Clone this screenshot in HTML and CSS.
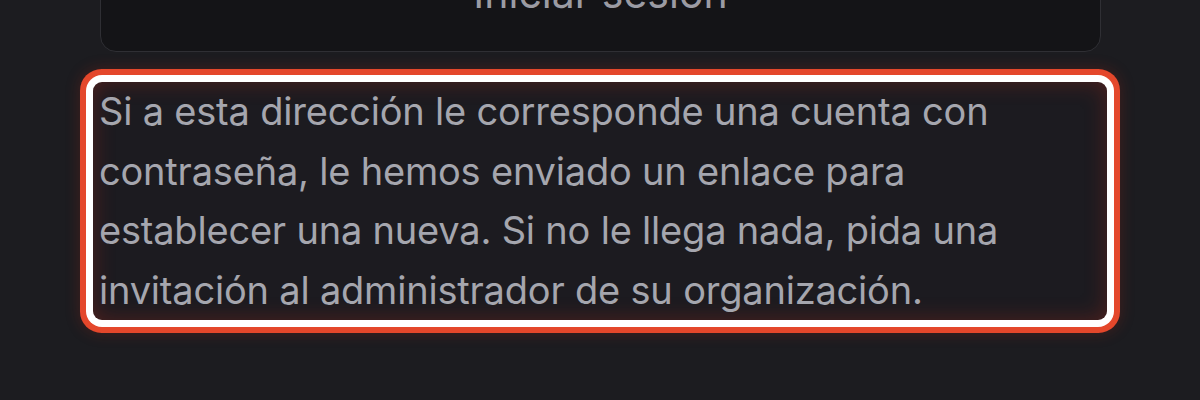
FILE: index.html
```html
<!DOCTYPE html>
<html lang="es">
<head>
<meta charset="utf-8">
<title>Restablecer contraseña</title>
<link rel="stylesheet" href="styles.css">
</head>
<body>
<main class="panel">
  <button class="btn" type="button">Iniciar sesión</button>
  <p class="note">Si a esta dirección le corresponde una cuenta con contraseña, le hemos enviado un enlace para establecer una nueva. Si no le llega nada, pida una invitación al administrador de su organización.</p>
</main>
</body>
</html>
```

FILE: styles.css
```css
html, body {
  margin: 0;
  padding: 0;
  background: #1c1c20;
  height: 100%;
  overflow: hidden;
}

body {
  font-family: Inter, "Noto Sans", "Liberation Sans", sans-serif;
}

.panel {
  width: 1001px;
  margin: -48px 0 0 100px;
  display: flex;
  flex-direction: column;
  gap: 30px;
}

.btn {
  box-sizing: border-box;
  height: 100px;
  width: 100%;
  background: #141417;
  border: 1.5px solid #2f2f34;
  border-radius: 16px;
  color: #9b9ba3;
  font-family: inherit;
  font-size: 41px;
  padding: 0 0 18px;
  display: flex;
  align-items: center;
  justify-content: center;
}

.note {
  margin: 0 -7px;
  padding: 0 6px;
  font-size: 38px;
  letter-spacing: -0.2px;
  line-height: 59.5px;
  color: #a5a6ae;
  background: #1c1b20;
  border-radius: 9px;
  width: 1002px;
  box-shadow:
    inset 0 0 22px rgba(190, 45, 25, 0.32),
    0 0 0 7px #ffffff,
    0 0 0 13px #e4472b,
    0 0 14px 14px rgba(170, 40, 25, 0.25);
}
```
